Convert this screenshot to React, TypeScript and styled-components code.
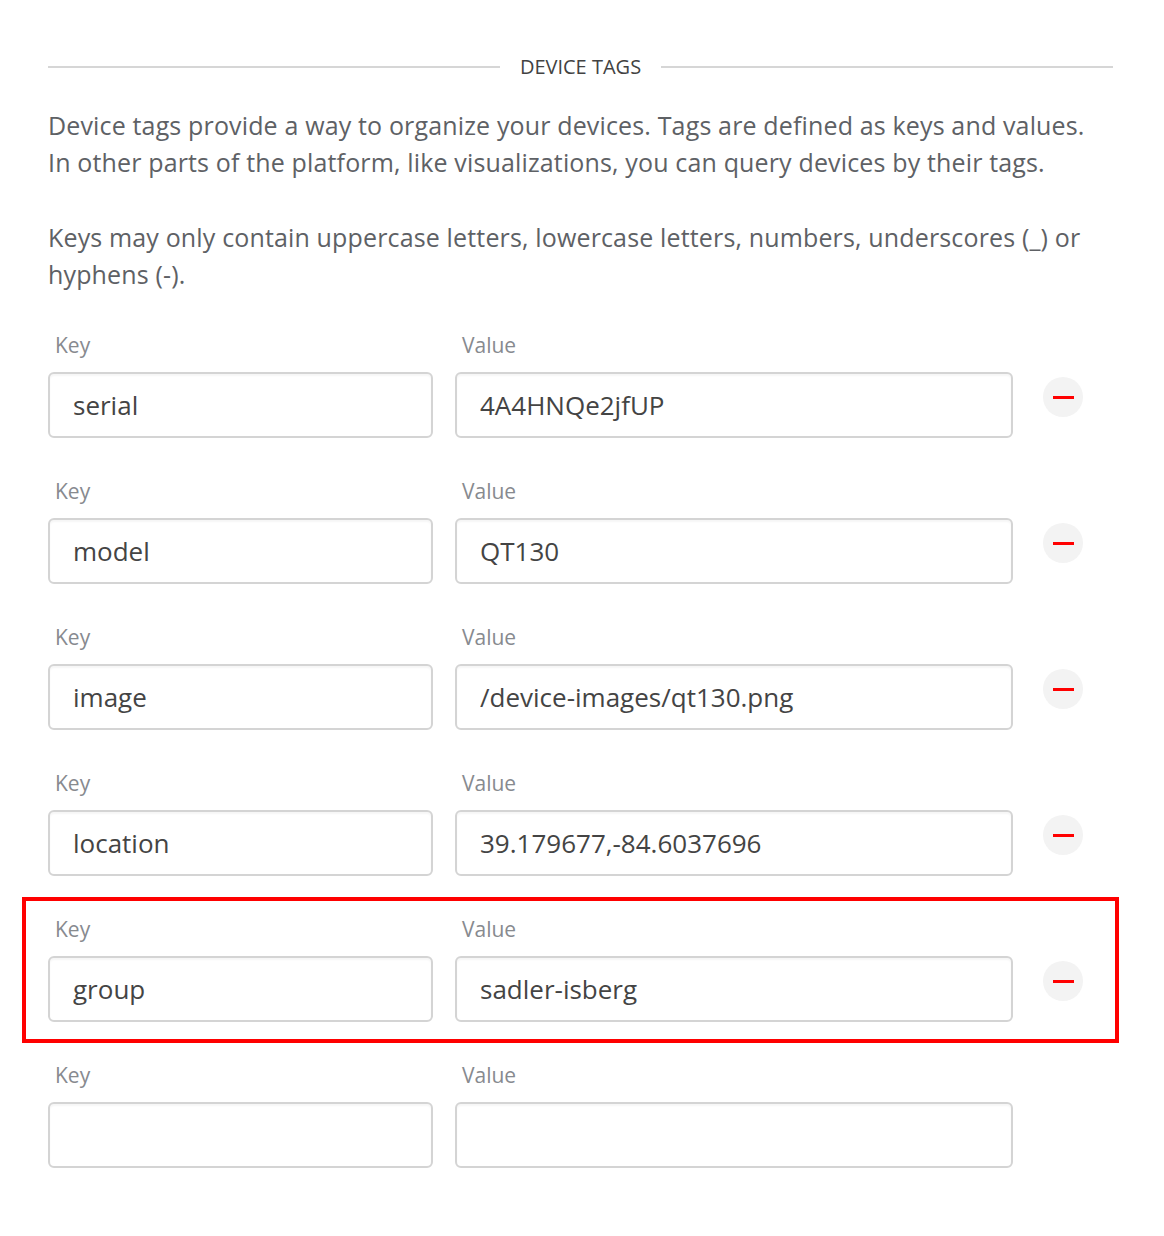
import React from "react";
import styled, { createGlobalStyle } from "styled-components";

const GlobalStyle = createGlobalStyle`
  html, body {
    margin: 0;
    padding: 0;
    background: #ffffff;
  }
  body {
    font-family: "Open Sans", "Noto Sans", sans-serif;
    color: #4a4a4a;
  }
`;

const Page = styled.div`
  padding: 55px 51px 60px 48px;
  box-sizing: border-box;
  width: 1164px;
`;

const Divider = styled.div`
  display: flex;
  align-items: center;
  gap: 20px;
  height: 24px;
  &::before,
  &::after {
    content: "";
    flex: 1;
    height: 2px;
    background: #d6d6d6;
  }
`;

const DividerTitle = styled.span`
  font-size: 20px;
  line-height: 24px;
  color: #424242;
  text-transform: uppercase;
`;

const Intro = styled.div`
  margin-top: 28px;
  margin-bottom: 20px;
`;

const Paragraph = styled.p`
  margin: 0;
  font-size: 25px;
  line-height: 37px;
  letter-spacing: 0.15px;
  color: #5e6165;
  & + & {
    margin-top: 38px;
  }
`;

const Row = styled.div<{ $highlighted?: boolean }>`
  display: flex;
  align-items: flex-start;
  padding: 20px 0 21px;
  ${(p) =>
    p.$highlighted &&
    `
    margin: 0 -6px 0 -26px;
    padding: 16px 2px 17px 22px;
    border: 4px solid #ff0000;
  `}
`;

const Field = styled.label<{ $width: number }>`
  display: flex;
  flex-direction: column;
  width: ${(p) => p.$width}px;
  flex: none;
  & + & {
    margin-left: 22px;
  }
`;

const FieldLabel = styled.span`
  font-size: 21px;
  line-height: 24px;
  color: #878a8f;
  padding-left: 7px;
  margin-bottom: 15px;
`;

const Input = styled.input`
  box-sizing: border-box;
  height: 66px;
  width: 100%;
  border: 2px solid #d4d4d4;
  border-radius: 6px;
  box-shadow: inset 0 2px 2px rgba(0, 0, 0, 0.04);
  padding: 0 23px;
  font-family: inherit;
  font-size: 26px;
  color: #444444;
  background: #fff;
  outline: none;
`;

const RemoveButton = styled.button`
  flex: none;
  width: 40px;
  height: 40px;
  margin: 44px 0 0 30px;
  border: none;
  border-radius: 50%;
  background: #f3f3f3;
  display: flex;
  align-items: center;
  justify-content: center;
  padding: 0;
  cursor: pointer;
  &::before {
    content: "";
    width: 21px;
    height: 3px;
    background: #ff0000;
  }
`;

type Tag = { key: string; value: string; highlighted?: boolean };

const tags: Tag[] = [
  { key: "serial", value: "4A4HNQe2jfUP" },
  { key: "model", value: "QT130" },
  { key: "image", value: "/device-images/qt130.png" },
  { key: "location", value: "39.179677,-84.6037696" },
  { key: "group", value: "sadler-isberg", highlighted: true },
];

export default function App() {
  return (
    <>
      <GlobalStyle />
      <Page>
        <Divider>
          <DividerTitle>Device Tags</DividerTitle>
        </Divider>
        <Intro>
          <Paragraph>
            Device tags provide a way to organize your devices. Tags are defined as keys and values.
            <br />
            In other parts of the platform, like visualizations, you can query devices by their tags.
          </Paragraph>
          <Paragraph>
            Keys may only contain uppercase letters, lowercase letters, numbers, underscores (_) or
            <br />
            hyphens (-).
          </Paragraph>
        </Intro>
        {tags.map((t) => (
          <Row key={t.key} $highlighted={t.highlighted}>
            <Field $width={385}>
              <FieldLabel>Key</FieldLabel>
              <Input defaultValue={t.key} />
            </Field>
            <Field $width={558}>
              <FieldLabel>Value</FieldLabel>
              <Input defaultValue={t.value} />
            </Field>
            <RemoveButton aria-label="Remove tag" />
          </Row>
        ))}
        <Row>
          <Field $width={385}>
            <FieldLabel>Key</FieldLabel>
            <Input defaultValue="" />
          </Field>
          <Field $width={558}>
            <FieldLabel>Value</FieldLabel>
            <Input defaultValue="" />
          </Field>
        </Row>
      </Page>
    </>
  );
}
